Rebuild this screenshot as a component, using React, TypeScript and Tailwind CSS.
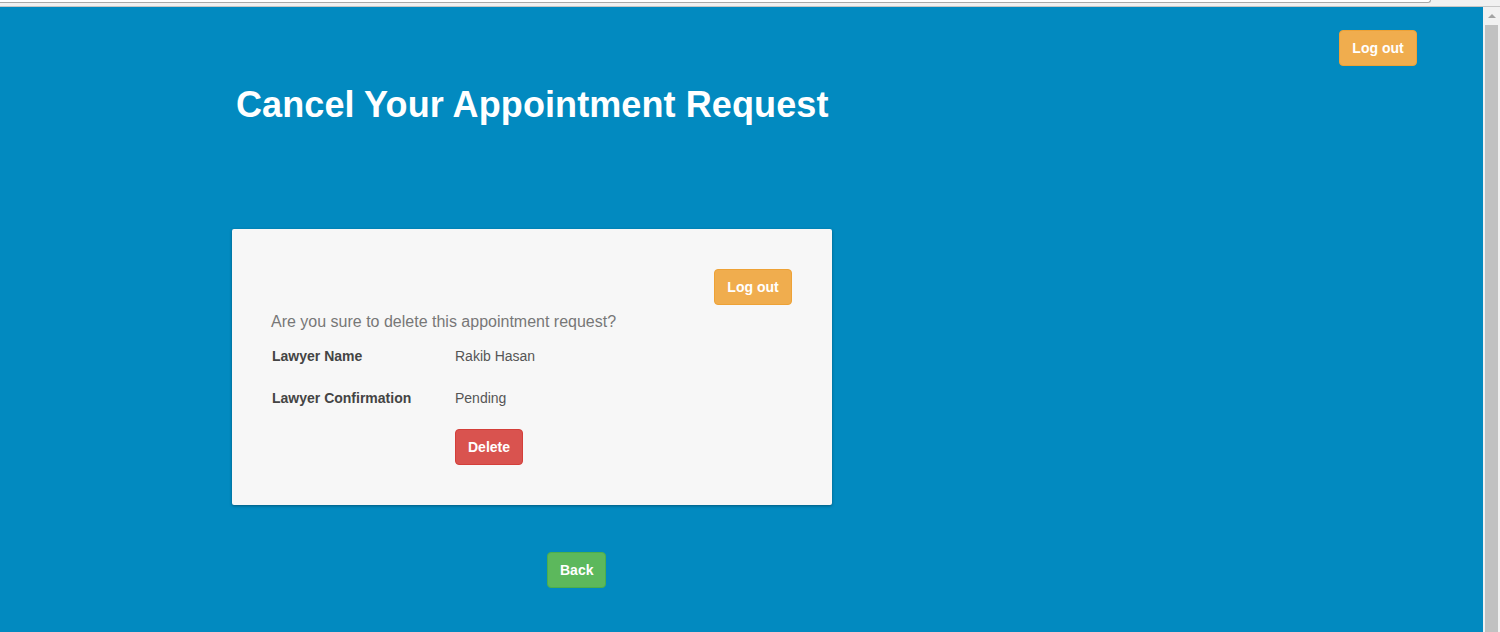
const font = { fontFamily: '"Liberation Sans", Arial, sans-serif' };

function Btn({ label, tone }: { label: string; tone: "warn" | "danger" | "ok" }) {
  const cls =
    tone === "warn"
      ? "bg-[#f0ad4e] border-[#eea236] w-[78px]"
      : tone === "danger"
      ? "bg-[#d9534f] border-[#d43f3a] px-[12px]"
      : "bg-[#5cb85c] border-[#4cae4c] px-[12px]";
  return (
    <button
      className={`h-[36px] rounded-[4px] border text-white text-[14px] font-bold leading-[20px] ${cls}`}
    >
      {label}
    </button>
  );
}

export default function App() {
  return (
    <div className="h-[632px] w-full overflow-hidden flex flex-col bg-[#f1f1f1]" style={font}>
      {/* browser chrome strip */}
      <div className="h-[7px] shrink-0 border-b border-[#c6c6c6] bg-[#f1f1f1]">
        <div className="h-[3px] w-[1431px] bg-white border-b border-r border-[#a9a9a9] rounded-br-[3px]" />
      </div>

      <div className="flex flex-1 min-h-0">
        <main className="flex-1 bg-[#028ac0] pt-[23px]">
          <div className="flex justify-end pr-[66px]">
            <Btn label="Log out" tone="warn" />
          </div>

          <div className="pl-[232px]">
            <h1 className="mt-[19px] pl-[4px] text-[36px] leading-[40px] font-bold tracking-[0.1px] text-white">
              Cancel Your Appointment Request
            </h1>

            <div className="mt-[104px] w-[600px] bg-[#f7f7f7] rounded-[2px] shadow-[0_1px_3px_rgba(0,0,0,0.35)] p-[40px]">
              <div className="flex justify-end">
                <Btn label="Log out" tone="warn" />
              </div>
              <p className="mt-[6px] -ml-[1px] text-[16px] leading-[22px] text-[#777]">
                Are you sure to delete this appointment request?
              </p>

              <div className="mt-[13px] grid grid-cols-[183px_1fr] gap-y-[22px] text-[14px] leading-[20px]">
                <div className="font-bold text-[#444]">Lawyer Name</div>
                <div className="text-[#555]">Rakib Hasan</div>
                <div className="font-bold text-[#444]">Lawyer Confirmation</div>
                <div className="text-[#555]">Pending</div>
              </div>

              <div className="mt-[21px] pl-[183px]">
                <Btn label="Delete" tone="danger" />
              </div>
            </div>

            <div className="mt-[47px] pl-[315px]">
              <Btn label="Back" tone="ok" />
            </div>
          </div>
        </main>

        {/* scrollbar */}
        <div className="w-[17px] shrink-0 bg-[#f1f1f1] flex flex-col items-center">
          <div className="h-[18px] flex items-center justify-center">
            <div className="w-0 h-0 border-l-[4px] border-r-[4px] border-b-[4px] border-l-transparent border-r-transparent border-b-[#a3a3a3]" />
          </div>
          <div className="w-[13px] flex-1 bg-[#c1c1c1]" />
        </div>
      </div>
    </div>
  );
}
